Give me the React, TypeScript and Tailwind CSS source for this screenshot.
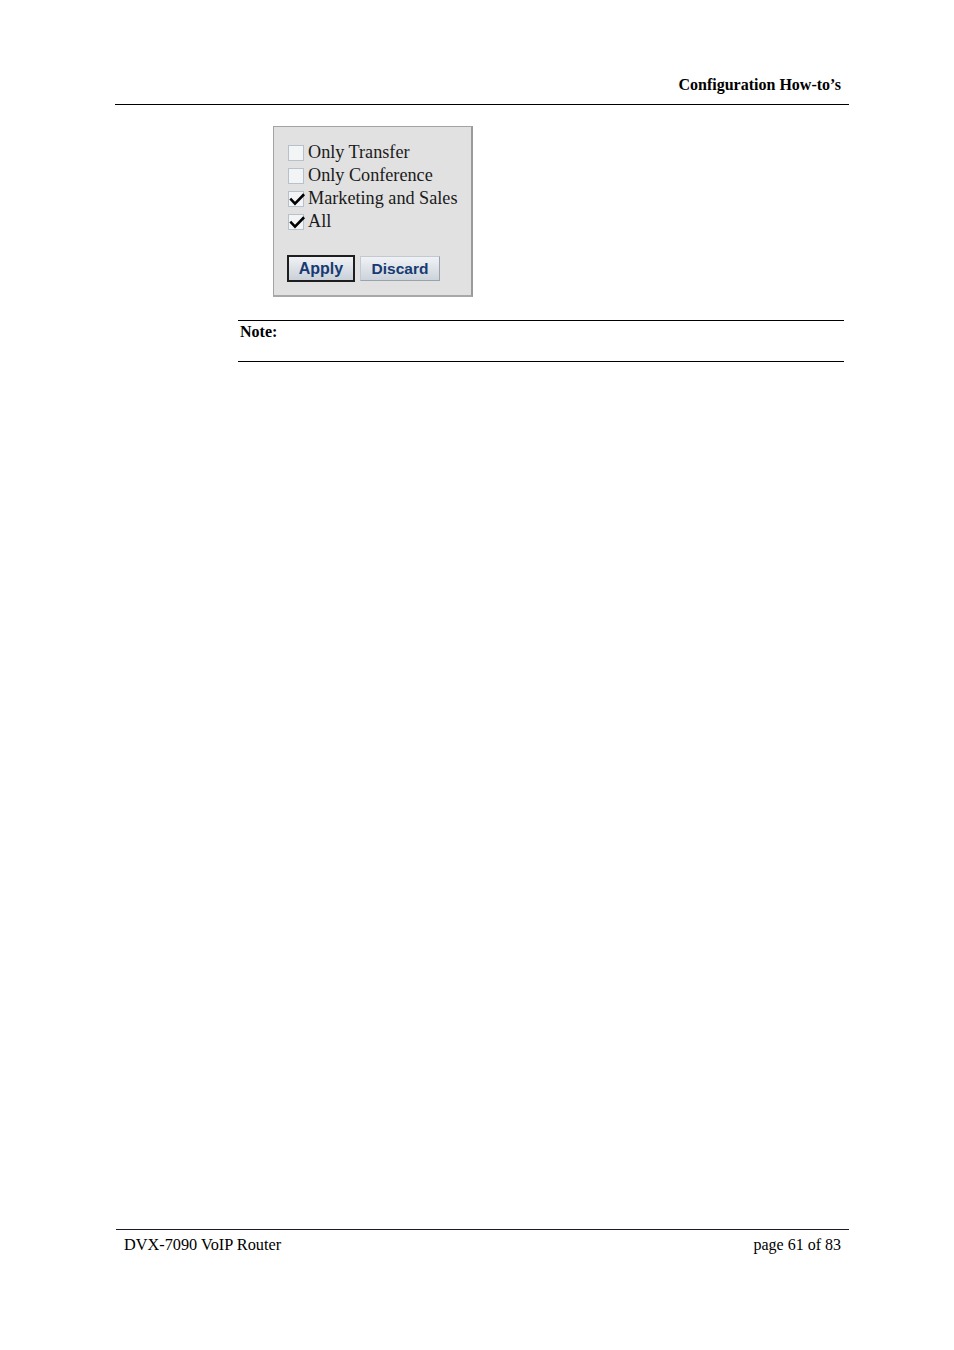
import React from "react";

const serif = { fontFamily: '"Liberation Serif", "Times New Roman", serif' };

function Box({ checked }: { checked: boolean }) {
  return (
    <span className="relative inline-block w-[16px] h-[16px] border border-[#b7c1cc] bg-[#f3f4f6] shrink-0">
      {checked && (
        <svg viewBox="0 0 16 16" className="absolute left-[0px] top-[0px] w-[16px] h-[16px]">
          <path d="M2.2 7.6 L6 11.6 L14.2 3.2" fill="none" stroke="#000" strokeWidth="2.6" strokeLinecap="square" strokeLinejoin="miter" />
        </svg>
      )}
    </span>
  );
}

export default function App() {
  const items = [
    { label: "Only Transfer", checked: false },
    { label: "Only Conference", checked: false },
    { label: "Marketing and Sales", checked: true },
    { label: "All", checked: true },
  ];
  return (
    <div className="w-[954px] h-[1350px] bg-white flex flex-col text-black" style={serif}>
      <div className="ml-[115px] w-[734px] pt-[75px] pb-[9px] border-b border-black text-right pr-[8px] text-[16px] font-bold leading-[20px]">
        Configuration How-to’s
      </div>
      <div className="ml-[273px] mt-[21px] w-[200px] bg-[#e1e1e1] border border-[#a3a3a3] border-r-2 border-r-[#9a9a9a] border-b-2 border-b-[#a8a8a8] pt-[14px] pb-[13px] pl-[14px]">
        <div className="flex flex-col">
          {items.map((it) => (
            <div key={it.label} className="flex items-center h-[23px] gap-[4px]">
              <Box checked={it.checked} />
              <span className="text-[18.2px] leading-[23px] text-[#1a1a1a] whitespace-nowrap">{it.label}</span>
            </div>
          ))}
        </div>
        <div className="flex items-center gap-[5px] mt-[22px] -ml-[1px]" style={{ fontFamily: '"Liberation Sans", Arial, sans-serif' }}>
          <button className="w-[68px] h-[27px] border-2 border-[#1e1e1e] bg-gradient-to-b from-[#f0f2f5] to-[#c9d0d8] text-[16px] font-bold text-[#173a73] leading-none flex items-center justify-center">
            Apply
          </button>
          <button className="w-[80px] h-[25px] border border-[#c3c9d0] border-r-[#9aa2ab] border-b-[#9aa2ab] bg-gradient-to-b from-[#f0f2f5] to-[#ccd3db] text-[15.5px] font-bold text-[#173a73] leading-none flex items-center justify-center">
            Discard
          </button>
        </div>
      </div>
      <div className="ml-[238px] mt-[23px] w-[606px] h-[42px] border-t border-b border-black pl-[2px] pt-[2px] text-[16px] font-bold leading-[18px]">
        Note:
      </div>
      <div className="flex-1" />
      <div className="ml-[116px] w-[733px] h-[121px] border-t border-[#1a1a2e] flex justify-between pl-[8px] pr-[8px] pt-[5px] text-[16px] leading-[20px]">
        <span className="text-[16.3px]">DVX-7090 VoIP Router</span>
        <span>page 61 of 83</span>
      </div>
    </div>
  );
}
